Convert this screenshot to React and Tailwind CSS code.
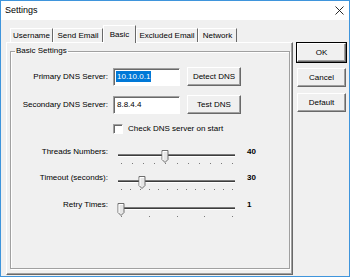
import React from "react";

const raised =
    "bg-[#f0f0f0] border border-t-white border-l-white border-r-[#696969] border-b-[#696969] shadow-[inset_-1px_-1px_0_#a0a0a0]";

const Button = ({ children, className = "" }) => (
    <div className={`flex items-center justify-center h-[19px] ${raised} ${className}`}>
        {children}
    </div>
);

const TextBox = ({ children }) => (
    <div className="w-[67px] h-[18px] bg-white border border-t-[#a0a0a0] border-l-[#a0a0a0] border-r-white border-b-white shadow-[inset_1px_1px_0_#696969] flex items-center pl-[2px]">
        {children}
    </div>
);

const Tab = ({ label, className = "", active = false }) => (
    <div
        className={
            active
                ? `relative z-10 -mb-px h-[18px] flex items-start pt-[3px] justify-center bg-[#f0f0f0] border-t border-l border-t-white border-l-white border-r border-r-[#696969] ${className}`
                : `h-[14px] flex items-center justify-center border-t border-l border-t-white border-l-white border-r border-r-[#696969] ${className}`
        }
    >
        {label}
    </div>
);

// trackbar drawing: ticks start at x=8, track from x=5 to 122
const Trackbar = ({ ticks, thumb }) => {
    const step = (232 - 121) / ticks;
    const marks = [];
    for (let i = 0; i <= ticks; i++) marks.push(8 + i * step);
    return (
        <svg width="130" height="20" className="block">
            <line x1="5" y1="7.5" x2="122" y2="7.5" stroke="#7a7a7a" />
            <line x1="5" y1="8.5" x2="122" y2="8.5" stroke="#3c3c3c" />
            <line x1="5" y1="9.5" x2="122" y2="9.5" stroke="#ffffff" />
            {marks.map((x, i) => (
                <rect key={i} x={Math.round(x)} y="16" width="1" height="1" fill="#7a7a7a" />
            ))}
            <polygon
                points={`${thumb - 3},3.5 ${thumb + 3},3.5 ${thumb + 3},12.5 ${thumb},15.5 ${thumb - 3},12.5`}
                fill="#e6e6e6"
                stroke="#6e6e6e"
            />
            <polyline
                points={`${thumb - 2},13 ${thumb - 2},4.5 ${thumb + 2},4.5`}
                fill="none"
                stroke="#ffffff"
            />
        </svg>
    );
};

const SliderRow = ({ label, value, ticks, thumb, className = "" }) => (
    <div className={`flex items-start ${className}`}>
        <div className="w-[97px] text-right leading-[10px]">{label}</div>
        <div className="ml-[5px]">
            <Trackbar ticks={ticks} thumb={thumb} />
        </div>
        <div className="ml-[4px] leading-[10px] font-bold">{value}</div>
    </div>
);

export default function App() {
    return (
        <div className="w-[350px] h-[277px] border border-[#3f95dc] bg-[#f0f0f0] flex flex-col font-['Liberation_Sans',Arial,sans-serif] text-[8px] text-black overflow-hidden">
            {/* title bar */}
            <div className="h-[19px] bg-white flex items-center justify-between pl-[4px] pr-[5px]">
                <span className="text-[9px]">Settings</span>
                <svg width="9" height="9" viewBox="0 0 9 9">
                    <path d="M0.5 0.5 L8.5 8.5 M8.5 0.5 L0.5 8.5" stroke="#111" strokeWidth="0.9" />
                </svg>
            </div>

            <div className="flex pl-[5px] pt-[4px]">
                <div className="w-[287px] flex flex-col">
                    {/* tabs */}
                    <div className="h-[18px] flex items-end pl-[4px]">
                        <Tab label="Username" className="w-[43px]" />
                        <Tab label="Send Email" className="w-[50px]" />
                        <Tab label="Basic" className="w-[33px]" active />
                        <Tab label="Excluded Email" className="w-[62px]" />
                        <Tab label="Network" className="w-[39px]" />
                    </div>

                    {/* tab page */}
                    <div className="h-[233px] border border-t-white border-l-white border-r-[#696969] border-b-[#696969] shadow-[inset_-1px_-1px_0_#a0a0a0] pt-[3px] pl-[3px]">
                        <fieldset className="w-[280px] h-[223px] border border-[#a0a0a0] shadow-[1px_1px_0_#fff,inset_1px_1px_0_#fff]">
                            <legend className="ml-[4px] px-[1px] leading-[10px]">Basic Settings</legend>

                            <div className="flex items-center mt-[11px]">
                                <div className="w-[97px] text-right">Primary DNS Server:</div>
                                <div className="ml-[5px]">
                                    <TextBox>
                                        <span className="bg-[#0078d7] text-white px-[1px] leading-[11px]">10.10.0.1</span>
                                    </TextBox>
                                </div>
                                <Button className="ml-[7px] w-[54px]">Detect DNS</Button>
                            </div>

                            <div className="flex items-center mt-[9px]">
                                <div className="w-[97px] text-right">Secondary DNS Server:</div>
                                <div className="ml-[5px]">
                                    <TextBox>
                                        <span className="px-[1px]">8.8.4.4</span>
                                    </TextBox>
                                </div>
                                <Button className="ml-[7px] w-[54px]">Test DNS</Button>
                            </div>

                            <div className="flex items-center mt-[9px] ml-[102px]">
                                <div className="w-[10px] h-[10px] bg-white border border-t-[#a0a0a0] border-l-[#a0a0a0] border-r-white border-b-white shadow-[inset_1px_1px_0_#696969]" />
                                <span className="ml-[5px]">Check DNS server on start</span>
                            </div>

                            <SliderRow label="Threads Numbers:" value="40" ticks={10} thumb={52} className="mt-[12px]" />
                            <SliderRow label="Timeout (seconds):" value="30" ticks={12} thumb={29} className="mt-[6px]" />
                            <SliderRow label="Retry Times:" value="1" ticks={4} thumb={8} className="mt-[7px]" />
                        </fieldset>
                    </div>
                </div>

                {/* dialog buttons */}
                <div className="ml-[4px] mt-[19px] flex flex-col gap-[6px]">
                    <Button className="w-[49px] outline outline-1 outline-black">OK</Button>
                    <Button className="w-[49px]">Cancel</Button>
                    <Button className="w-[49px]">Default</Button>
                </div>
            </div>
        </div>
    );
}
